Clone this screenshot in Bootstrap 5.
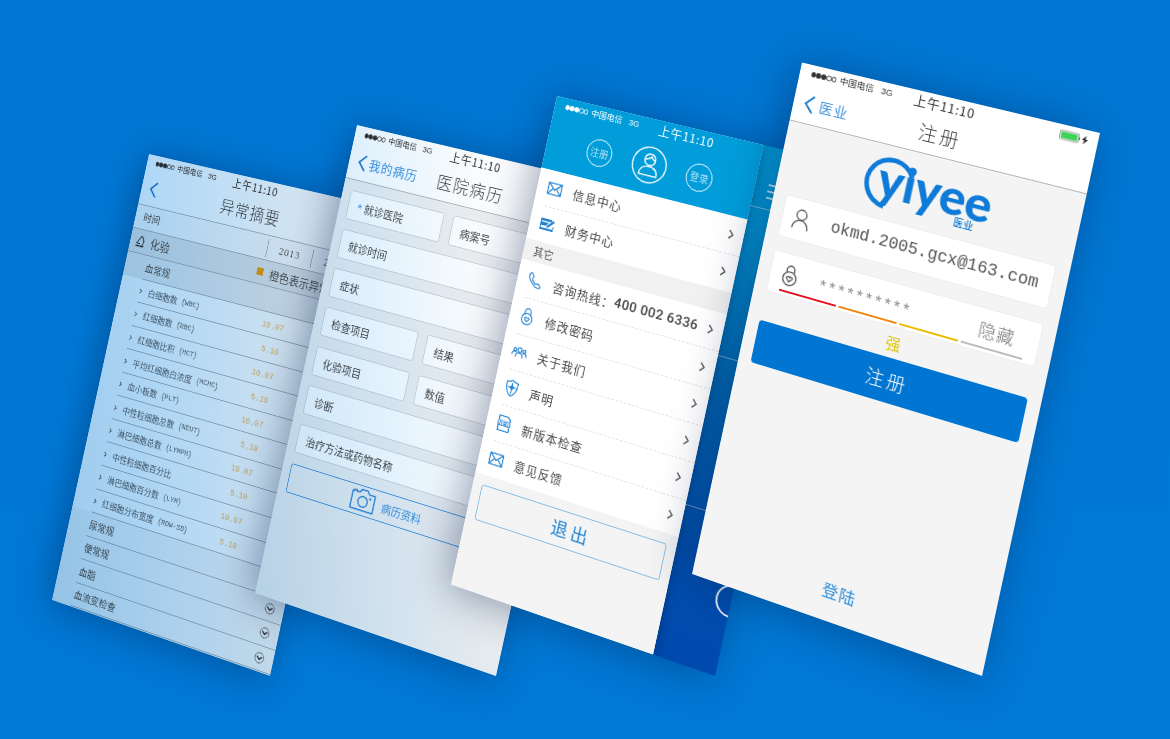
<!DOCTYPE html>
<html lang="zh-CN">
<head>
<meta charset="utf-8">
<title>医业</title>
<meta name="viewport" content="width=device-width, initial-scale=1">
<link href="https://cdn.jsdelivr.net/npm/bootstrap@5.3.0/dist/css/bootstrap.min.css" rel="stylesheet">
<style>
  body{background:#0077d4;font-family:"Noto Sans CJK SC","Liberation Sans",sans-serif;font-weight:400;line-height:1;color:#555;overflow:hidden}
  .stage{width:1170px;height:739px;background:linear-gradient(180deg,#0077d3,#0078d5)}
  /* each phone is a 320x568 sheet tilted in space */
  .phone{position:absolute;left:0;top:0;width:320px;height:568px;transform-origin:0 0;overflow:hidden;background:#f4f4f4;box-shadow:-6px 4px 46px rgba(0,25,70,.4)}
  .phone-a{transform:matrix3d(.6334,.1259,0,-.00016281,-.1713,.779,0,-.0000102,0,0,1,0,149,154,0,1)}
  .phone-b{transform:matrix3d(.6756,.1522,0,-.00015938,-.1787,.8261,0,.0000035,0,0,1,0,357,125,0,1)}
  .phone-c{transform:matrix3d(.7059,.1734,0,-.00016656,-.18662,.86004,0,0,0,0,1,0,557,96,0,1)}
  .phone-d{transform:matrix3d(.7294,.1959,0,-.00018344,-.1891,.9042,0,.0000065,0,0,1,0,802,62.5,0,1)}
  .tint{position:absolute;inset:0;mix-blend-mode:multiply}
  .phone-a .tint{background:linear-gradient(75deg,#9bcbef 0%,#b3d9f6 38%,#cfe3f2 75%,#d3e2ec 100%)}
  .phone-b .tint{background:linear-gradient(72deg,#c3dff3 0%,#e3f2fd 40%,#f8fbfd 65%,#fff 85%)}
  .phone-c .tint{background:linear-gradient(62deg,#e9f1f8 0%,#fff 40%)}

  .status{height:20px;font-family:"Liberation Sans","Noto Sans CJK SC",sans-serif;font-size:9.5px;font-weight:400;color:#333;position:relative}
  .status .dots{width:29px;margin-left:12.5px;margin-right:3.5px}
  .status .dots i{width:5.4px;height:5.4px;border-radius:50%;border:.7px solid currentColor}
  .status .dots i.on{background:currentColor}
  .clock{position:absolute;left:0;right:0;top:1px;text-align:center;font-family:"Noto Sans CJK SC",sans-serif;font-size:13.6px;font-weight:400;letter-spacing:.6px;line-height:18px}
  .power{margin-left:auto;margin-right:8px}
  .topbar{height:44px;border-bottom:1px solid #b4b4b4;position:relative;color:#444}
  .topbar .title{position:absolute;left:1px;right:0;text-align:center;font-size:20px;letter-spacing:1.5px;line-height:42px;font-weight:300}
  .topbar .back{color:#3a93dc;font-size:15.2px;letter-spacing:1px;margin-left:12px}
  .headwhite{background:#fff}

  /* lab report */
  .lab .band{height:30px;border-bottom:1px solid #a9b0b6;background:#fafafa}
  .lab .sect{background:#e4e6e8}
  .lab .sub{height:29.6px;padding-left:30px;font-size:12.5px;position:relative;background:#f4f5f6}
  .lab .sub.first{background:#e9ebed}
  .lab .sub::after,.lab .item::after{content:"";position:absolute;left:29px;right:0;bottom:0;height:1px;background:#a8b0b7}
  .lab .item{height:29.55px;position:relative;padding-left:29px;font-size:11px;background:#fdfdfd;color:#5c666e}
  .lab .item svg{margin-right:9px;color:#333}
  .lab .lat{font-family:"Liberation Mono",monospace;font-size:9.4px}
  .lab .num{position:absolute;right:80px;top:11px;font:400 10.2px/10px "Liberation Mono",monospace;color:#f3b765}
  .lab .roundv{position:absolute;left:294px;top:7px}
  .lab .year{border-left:1px solid #a5acb2;height:22px;width:63px;font:400 13px/22px "Liberation Serif",serif;letter-spacing:.9px;text-align:center}
  .swatch{width:9px;height:9px;background:#f5a01c;margin-right:9px}

  /* record form */
  .form-rows{padding:11.5px 11px;gap:12.3px}
  .fieldbox{height:35px;border:1px solid #ced2d6;border-radius:3px;background:#fff;padding-left:11px;font-size:13px;color:#4a4a4a}
  .fieldbox.half{width:125px}
  .must{color:#4a9de0;width:10px;font-size:16px;line-height:10px;padding-top:6px}
  .upload{height:35px;border:1px solid #3a93dc;border-radius:3px;color:#3a93dc;font-size:13px;padding-left:83px}

  /* drawer */
  .under{background:linear-gradient(180deg,#009ddb 0%,#0094d2 16%,#0067b4 46%,#0050b0 78%,#0049ae 100%);position:relative}
  .under .hair{position:absolute;left:0;right:0;height:1px;background:rgba(255,255,255,.45)}
  .drawer{width:248px;background:#f4f4f4;box-shadow:0 0 14px rgba(0,20,60,.4);z-index:1}
  .drawer .top{height:62.5px;background:#009dda}
  .ring{border:1.2px solid #fff;border-radius:50%;width:31px;height:31px;color:#fff;font-size:11px;font-weight:300}
  .menurow{height:41.3px;background:#fff;font-size:14px;letter-spacing:1px;padding:0 11px 0 12px;position:relative;color:#4a4a4a}
  .menurow + .menurow::before{content:"";position:absolute;left:14px;right:0;top:0;border-top:1px dashed #e0e0e0}
  .menurow .ico{width:19px;margin-right:13px;color:#1c7fd2}
  .tel{font-family:Roboto,"Liberation Sans",sans-serif;font-weight:500;font-size:15.4px;letter-spacing:.4px;color:#444}
  .other{height:24px;background:#f1f1f1;font-size:12.5px;padding-left:12px}
  .quit{margin:11px 11px 0;height:41px;border:1px solid #7cbdea;border-radius:3px;color:#1f83d5;font-size:20px;letter-spacing:4px;padding:2px 0 0 5px}

  /* sign-up */
  .white{background:#fff;border-radius:4px;margin:0 14px;height:46px;position:relative;border:.5px solid #eee}
  .mail{font-family:"Liberation Mono",monospace;font-size:17.7px;color:#555}
  .stars{font-family:"Liberation Mono",monospace;font-size:17px;color:#888}
  .bars{position:absolute;left:13px;right:13px;top:39px;gap:3px}
  .bars i{height:2.4px;flex:1}
  .go{margin:0 14px;height:47px;border-radius:4px;background:#0075d2;color:#fff;font-size:20px;font-weight:300;letter-spacing:3px;padding-left:3px}
  .logo{height:78px}
</style>
</head>
<body>
<svg width="0" height="0" class="position-absolute">
  <defs>
    <symbol id="chev" viewBox="0 0 6 10"><path d="M1 1l4 4-4 4" fill="none" stroke="currentColor" stroke-width="1.3"/></symbol>
    <symbol id="back" viewBox="0 0 11 20"><path d="M10 1L1.500 10 10 19" fill="none" stroke="#1577d0" stroke-width="1.900"/></symbol>
    <symbol id="mailic" viewBox="0 0 17 14"><g fill="none" stroke="currentColor" stroke-width="1.200"><path d="M1 1h15v12H1z"/><path d="M1 1l7.500 7L16 1M1 13l5.200-6M16 13l-5.200-6"/></g></symbol>
    <symbol id="lockic" viewBox="0 0 18 22"><g fill="none" stroke="currentColor" stroke-width="1.300"><circle cx="9" cy="14" r="7"/><path d="M5 8V5a4 4 0 018 0v3"/><path d="M9 17.300l-3-3c-.8-1.600 1.700-3.200 3-1.300 1.300-1.900 3.800-.3 3 1.300z"/></g></symbol>
    <symbol id="vround" viewBox="0 0 14 14"><circle cx="7" cy="7" r="6" fill="none" stroke="#444" stroke-width=".8"/><path d="M3.500 5.500L7 8.700l3.500-3.200" fill="none" stroke="#222" stroke-width="1.600"/></symbol>
  </defs>
</svg>
<main class="stage position-relative overflow-hidden">

  <section class="phone phone-a lab">
    <div class="headwhite">
      <div class="status d-flex align-items-center"><span class="dots d-flex justify-content-between"><i class="on"></i><i class="on"></i><i class="on"></i><i></i><i></i></span>中国电信<span class="ms-2">3G</span><span class="clock">上午11:10</span></div>
      <div class="topbar d-flex align-items-center"><span class="title">异常摘要</span><span class="back"><svg width="11" height="20"><use href="#back"/></svg></span></div>
    </div>
    <div class="band d-flex align-items-center ps-2"><span style="font-size:12.5px" class="ms-1">时间</span><span class="year ms-auto">2013</span><span class="year">2014</span></div>
    <div class="band sect d-flex align-items-center"><svg width="14" height="15" viewBox="0 0 14 15" class="ms-2 me-2"><g fill="none" stroke="#222" stroke-width="1.200"><path d="M8 1L2 10.500h5"/><path d="M8 1c5 3.500 5 8 2 12"/><path d="M1 13.500h12" stroke-width="1.500"/></g></svg><span style="font-size:14.5px">化验</span><span class="swatch ms-auto"></span><span class="text-nowrap" style="font-size:14px;width:115px">橙色表示异常</span></div>
    <div class="sub first d-flex align-items-center">血常规</div>
    <div class="item d-flex align-items-center"><svg width="4" height="7"><use href="#chev"/></svg>白细胞数（<span class="lat">WBC</span>）<span class="num">10.07</span></div>
    <div class="item d-flex align-items-center"><svg width="4" height="7"><use href="#chev"/></svg>红细胞数（<span class="lat">RBC</span>）<span class="num">5.10</span></div>
    <div class="item d-flex align-items-center"><svg width="4" height="7"><use href="#chev"/></svg>红细胞比积（<span class="lat">HCT</span>）<span class="num">10.07</span></div>
    <div class="item d-flex align-items-center"><svg width="4" height="7"><use href="#chev"/></svg>平均红细胞白浓度（<span class="lat">MCHC</span>）<span class="num">5.10</span></div>
    <div class="item d-flex align-items-center"><svg width="4" height="7"><use href="#chev"/></svg>血小板数（<span class="lat">PLT</span>）<span class="num">10.07</span></div>
    <div class="item d-flex align-items-center"><svg width="4" height="7"><use href="#chev"/></svg>中性粒细胞总数（<span class="lat">NEUT</span>）<span class="num">5.10</span></div>
    <div class="item d-flex align-items-center"><svg width="4" height="7"><use href="#chev"/></svg>淋巴细胞总数（<span class="lat">LYMPH</span>）<span class="num">10.07</span></div>
    <div class="item d-flex align-items-center"><svg width="4" height="7"><use href="#chev"/></svg>中性粒细胞百分比<span class="num">5.10</span></div>
    <div class="item d-flex align-items-center"><svg width="4" height="7"><use href="#chev"/></svg>淋巴细胞百分数（<span class="lat">LYM</span>）<span class="num">10.07</span></div>
    <div class="item d-flex align-items-center"><svg width="4" height="7"><use href="#chev"/></svg>红细胞分布宽度（<span class="lat">RDW-SD</span>）<span class="num">5.10</span></div>
    <div class="sub d-flex align-items-center">尿常规</div>
    <div class="sub d-flex align-items-center">便常规<svg class="roundv" width="14" height="14"><use href="#vround"/></svg></div>
    <div class="sub d-flex align-items-center">血脂<svg class="roundv" width="14" height="14"><use href="#vround"/></svg></div>
    <div class="sub d-flex align-items-center">血流变检查<svg class="roundv" width="14" height="14"><use href="#vround"/></svg></div>
    <div class="tint"></div>
  </section>

  <section class="phone phone-b" style="background:#eff0f1">
    <div class="headwhite">
      <div class="status d-flex align-items-center"><span class="dots d-flex justify-content-between"><i class="on"></i><i class="on"></i><i class="on"></i><i></i><i></i></span>中国电信<span class="ms-2">3G</span><span class="clock">上午11:10</span></div>
      <div class="topbar d-flex align-items-center"><span class="title">医院病历</span><span class="back d-flex align-items-center gap-1"><svg width="11" height="20"><use href="#back"/></svg>我的病历</span></div>
    </div>
    <div class="form-rows d-flex flex-column">
      <div class="d-flex gap-2"><div class="fieldbox half d-flex align-items-center"><span class="must">*</span>就诊医院</div><div class="fieldbox flex-fill d-flex align-items-center ms-1">病案号</div></div>
      <div class="fieldbox d-flex align-items-center">就诊时间</div>
      <div class="fieldbox d-flex align-items-center">症状</div>
      <div class="d-flex gap-2"><div class="fieldbox half d-flex align-items-center">检查项目</div><div class="fieldbox flex-fill d-flex align-items-center ms-1">结果</div></div>
      <div class="d-flex gap-2"><div class="fieldbox half d-flex align-items-center">化验项目</div><div class="fieldbox flex-fill d-flex align-items-center ms-1">数值</div></div>
      <div class="fieldbox d-flex align-items-center">诊断</div>
      <div class="fieldbox d-flex align-items-center">治疗方法或药物名称</div>
      <div class="upload d-flex align-items-center"><svg width="34" height="28" viewBox="0 0 32 26" class="me-1"><g fill="none" stroke="#1c7fd2" stroke-width="1.400"><path d="M2 5h2V3.500h3V5h3.500L13 1.500h7L22.500 5H30v19H2z"/><circle cx="16" cy="14.500" r="5.800"/></g><circle cx="24.500" cy="9.500" r="1.400" fill="currentColor"/></svg><span class="ms-1">病历资料</span></div>
    </div>
    <div class="tint"></div>
  </section>

  <section class="phone phone-c d-flex">
    <aside class="drawer position-relative flex-shrink-0">
      <div class="status d-flex align-items-center text-white" style="background:#009dda"><span class="dots d-flex justify-content-between"><i class="on"></i><i class="on"></i><i class="on"></i><i></i><i></i></span>中国电信<span class="ms-2">3G</span><span class="clock" style="right:-72px">上午11:10</span></div>
      <div class="top d-flex justify-content-center align-items-center" style="gap:23.5px;padding-left:1px"><span class="ring d-flex justify-content-center align-items-center">注册</span>
        <svg width="42" height="42" viewBox="0 0 36 36"><g fill="none" stroke="#fff" stroke-width="1.300"><circle cx="18" cy="18" r="17"/><circle cx="18" cy="13" r="5.500"/><path d="M13 13c4 0 5-2 6-3 1 2 2 3 4.500 3M9 28c0-6 4-8.500 9-8.500s9 2.500 9 8.500z"/></g></svg>
        <span class="ring d-flex justify-content-center align-items-center">登录</span></div>
      <div class="menurow d-flex align-items-center"><svg class="ico" height="15"><use href="#mailic"/></svg>信息中心<svg width="7" height="11" class="ms-auto"><use href="#chev"/></svg></div>
      <div class="menurow d-flex align-items-center"><svg class="ico" height="15" viewBox="0 0 17 14"><path d="M1 1h12v2.500H1zM1 5h9l-3 3.500H1zM1 11h14V8.500l1-1V13H1z" fill="currentColor"/><path d="M8 10.500l.8-2.800L15 1.500l1.500 1.500-6 6z" fill="currentColor"/><path d="M1 1v12" stroke="currentColor"/></svg>财务中心<svg width="7" height="11" class="ms-auto"><use href="#chev"/></svg></div>
      <div class="other d-flex align-items-center">其它</div>
      <div class="menurow d-flex align-items-center"><svg class="ico" height="19" viewBox="0 0 17 18"><path d="M3 1.500c-3 2-2 6 2 10s8 6 10.500 3.500c.8-1-2-3.500-3.500-3.500-1 .2-1.200 1.500-2.200 1.200C8 12 5.600 9 5.400 7.300 5.300 6.500 6.500 6 6.300 5 6 3.500 4 .9 3 1.500z" fill="none" stroke="currentColor" stroke-width="1.200"/></svg>咨询热线：<span class="tel">400 002 6336</span><svg width="7" height="11" class="ms-auto"><use href="#chev"/></svg></div>
      <div class="menurow d-flex align-items-center"><svg class="ico" height="20"><use href="#lockic"/></svg>修改密码<svg width="7" height="11" class="ms-auto"><use href="#chev"/></svg></div>
      <div class="menurow d-flex align-items-center"><svg class="ico" height="15" viewBox="0 0 20 14"><g fill="none" stroke="currentColor" stroke-width="1.300"><circle cx="10" cy="4" r="2.600"/><path d="M5.500 13c0-7 9-7 9 0"/><circle cx="4" cy="4.500" r="1.800"/><circle cx="16" cy="4.500" r="1.800"/><path d="M.8 11c0-5 4-5 5-3M19.200 11c0-5-4-5-5-3"/></g></svg>关于我们<svg width="7" height="11" class="ms-auto"><use href="#chev"/></svg></div>
      <div class="menurow d-flex align-items-center"><svg class="ico" height="20" viewBox="0 0 17 19"><g fill="none" stroke="currentColor" stroke-width="1.200"><path d="M8.500 1c2 1.500 4 2 6.500 2 .3 7-1 12-6.500 15C3 15 1.700 10 2 3c2.500 0 4.500-.5 6.500-2z"/><path d="M8.500 3.500v12M4 8.500h9"/><path d="M8.500 6.500l2 2-2 2-2-2z"/></g></svg>声明<svg width="7" height="11" class="ms-auto"><use href="#chev"/></svg></div>
      <div class="menurow d-flex align-items-center"><svg class="ico" height="20" viewBox="0 0 17 19"><path d="M2 6.500V1.500h10L15 4.500v2M2 12.500v5h13v-5" fill="none" stroke="currentColor" stroke-width="1.300"/><path d="M1 6.300h15v6H1z" fill="currentColor"/><text x="8.500" y="11.500" font-size="6" font-weight="700" fill="#fff" text-anchor="middle" letter-spacing="0" font-family="Liberation Sans">NEW</text></svg>新版本检查<svg width="7" height="11" class="ms-auto"><use href="#chev"/></svg></div>
      <div class="menurow d-flex align-items-center"><svg class="ico" height="15"><use href="#mailic"/></svg>意见反馈<svg width="7" height="11" class="ms-auto"><use href="#chev"/></svg></div>
      <div class="quit d-flex justify-content-center align-items-center">退出</div>
    </aside>
    <div class="under flex-fill">
      <svg width="72" height="568" viewBox="0 0 72 568"><path d="M15 41h22M15 48h22M15 55h22" stroke="#fff" stroke-width="1.500"/><circle cx="72" cy="486" r="16.500" fill="none" stroke="#fff" stroke-width="2"/></svg>
      <span class="hair" style="top:67px"></span><span class="hair" style="top:234px"></span><span class="hair" style="top:400px"></span>
    </div>
    <div class="tint"></div>
  </section>

  <section class="phone phone-d">
    <div class="headwhite">
      <div class="status d-flex align-items-center"><span class="dots d-flex justify-content-between"><i class="on"></i><i class="on"></i><i class="on"></i><i></i><i></i></span>中国电信<span class="ms-2">3G</span><span class="clock">上午11:10</span>
        <svg class="power" width="31" height="11" viewBox="0 0 31 11"><rect x=".5" y="1" width="19" height="9" rx="1" fill="#fff" stroke="#777" stroke-width=".7"/><rect x="1.700" y="2.200" width="16.600" height="6.600" fill="#3fd35a"/><path d="M20.500 4v3" stroke="#777"/><path d="M27 1l-4 5h2.500L24.500 10.500 29 5h-2.600z" fill="#222"/></svg></div>
      <div class="topbar d-flex align-items-center"><span class="title" style="letter-spacing:3px;left:4px">注册</span><span class="back d-flex align-items-center" style="gap:6px"><svg width="11" height="20"><use href="#back"/></svg>医业</span></div>
    </div>
    <svg class="logo d-block" width="320" viewBox="0 64 320 78">
      <path d="M143.200 92A25 25 0 1 0 119 128.400" fill="none" stroke="#0f7bd8" stroke-width="5"/>
      <text x="108" y="119" font-family="Lato" font-weight="900" font-size="52" textLength="122" lengthAdjust="spacing" fill="#0f7bd8">yiyee</text>
      <text x="194.500" y="129.500" font-size="10.500" font-weight="500" fill="#0f7bd8">医业</text>
    </svg>
    <div class="white d-flex align-items-center"><svg width="19" height="24" viewBox="0 0 19 24" style="margin-left:11px;margin-right:24px"><g fill="none" stroke="#555" stroke-width="1.300"><circle cx="9.500" cy="7" r="5.500"/><path d="M1 22.500c0-13 17-13 17 0"/></g></svg><span class="mail">okmd.2005.gcx@163.com</span></div>
    <div class="white d-flex align-items-center" style="margin-top:15px"><svg width="19" height="23" style="margin-left:11.5px;margin-right:23px;color:#555"><use href="#lockic"/></svg><span class="stars pt-1">**********</span><span class="ms-auto" style="font-size:18px;font-weight:300;letter-spacing:1px;color:#777;margin-right:24px;margin-top:-3px">隐藏</span>
      <div class="bars d-flex"><i style="background:#e60f22"></i><i style="background:#f0860f"></i><i style="background:#e8bd00"></i><i style="background:#bbb"></i></div></div>
    <div class="d-flex justify-content-center align-items-center" style="height:32px;font-size:16px;color:#e3c400">强</div>
    <div class="go d-flex justify-content-center align-items-center">注册</div>
    <div class="text-center" style="margin-top:199px;font-size:17.5px;letter-spacing:1px;color:#2d8dd8">登陆</div>
  </section>
</main>
<script src="https://cdn.jsdelivr.net/npm/bootstrap@5.3.0/dist/js/bootstrap.bundle.min.js"></script>
</body>
</html>
